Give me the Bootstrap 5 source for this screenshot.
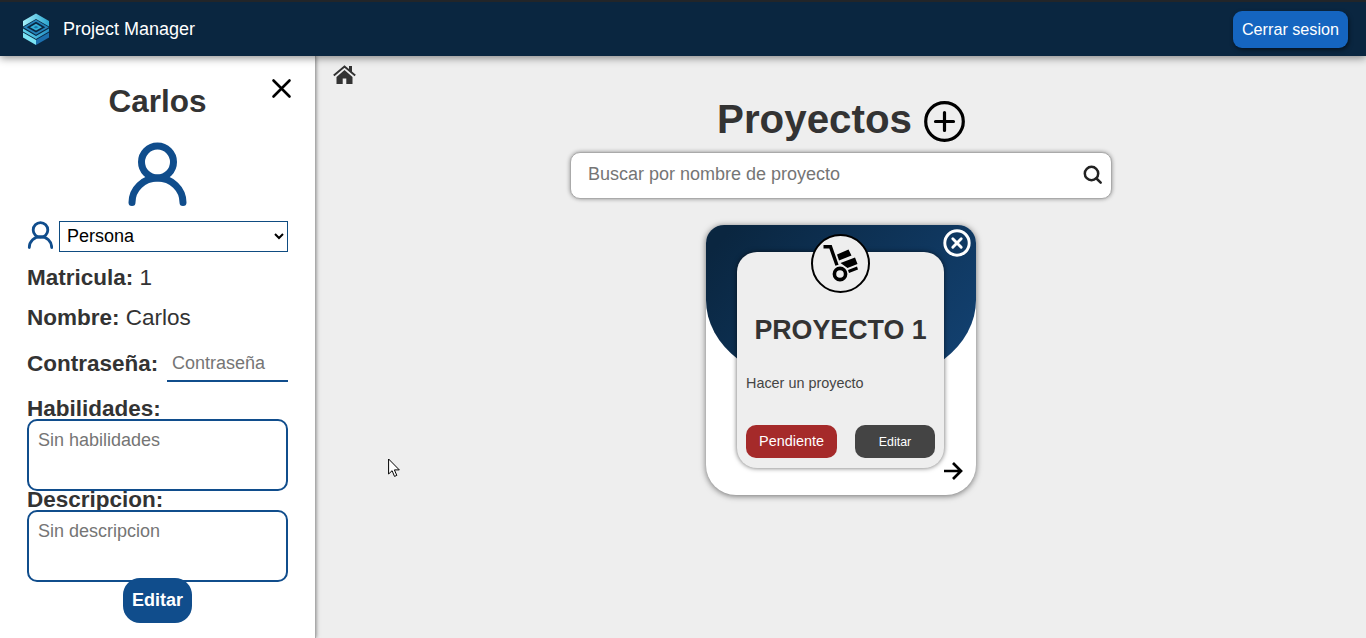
<!DOCTYPE html>
<html lang="es">
<head>
<meta charset="utf-8">
<meta name="viewport" content="width=device-width, initial-scale=1">
<title>Project Manager</title>
<link href="https://cdn.jsdelivr.net/npm/bootstrap@5.3.0/dist/css/bootstrap.min.css" rel="stylesheet">
<style>
  body { font-family: "Liberation Sans", Arial, sans-serif; color: #333; background: #eee; height: 638px; overflow: hidden; line-height: 1.15; }
  svg { display: block; flex: none; }
  .topbar { height: 56px; background: #0a2640; border-top: 2px solid #222529; box-shadow: 0 2px 8px rgba(0,0,0,.45); z-index: 3; padding: 0 18px 0 22px; }
  .brand-name { font-size: 18px; color: #fff; margin-left: 13px; }
  .btn-logout { background: #1565c0; color: #fff; font-size: 16.2px; width: 115px; height: 37px; border-radius: 9px; box-shadow: 1px 2px 4px rgba(0,0,0,.5); padding: 0; margin-top: 1px; }
  .sidebar { width: 316px; background: #fff; border-right: 1px solid #aaa; box-shadow: 0 0 4px rgba(0,0,0,.5); padding: 20px 27px 0; z-index: 2; }
  .user-title { font-size: 31.5px; font-weight: 700; line-height: 37px; margin: 7px 0 0; }
  .user-avatar { margin-top: 21px; }
  .btn-x { right: 22px; top: 21px; }
  .role-row { margin-top: 14px; }
  .role-row svg { margin-top: -3px; }
  .role-select { appearance: auto; border: 1px solid #0f4c81; background: #fff; color: #000; font-size: 18px; width: 229px; height: 31px; padding: 0 3px 1px; border-radius: 0; }
  .field-row { font-size: 22.5px; line-height: 26px; white-space: nowrap; }
  .field-row b, .field-label { font-weight: 700; }
  .field-label { font-size: 22.5px; line-height: 20px; }
  .pass-input { width: 121px; height: 37px; border: 0; border-bottom: 2px solid #104d8c; border-radius: 0; padding: 1px 5px 0; font-size: 18px; background: transparent; }
  .note-area { width: 261px; height: 72px; border: 2px solid #104d8c; border-radius: 10px; resize: none; font-size: 18px; padding: 9px; line-height: 20px; background: #fff; display: block; }
  ::placeholder { color: #757575 !important; opacity: 1; }
  .btn-save { width: 69px; height: 45px; border-radius: 17px; background: #104d8c; color: #fff; font-weight: 700; font-size: 18px; padding: 0; margin-top: -4px; position: relative; }
  .page-title { font-size: 40.3px; font-weight: 700; line-height: 48px; margin: 0; }
  .search-box { width: 542px; height: 47px; background: #fff; border: 1px solid #aaa; border-radius: 10px; box-shadow: 0 0 4px rgba(0,0,0,.4); padding: 0 8px 2px 17px; margin-top: 8px; }
  .search-box input { font-size: 18px; border: 0; padding: 0; background: transparent; }
  .project { width: 270px; height: 270px; background: #fff; border-radius: 18px 18px 30px 30px; box-shadow: 0 1px 6px rgba(0,0,0,.55); margin-top: 26px; padding: 27px 32px 0 31px; isolation: isolate; }
  .project-cap { left: 0; top: 0; width: 270px; height: 160px; z-index: -1; }
  .project-panel { height: 216px; background: #eee; border-radius: 20px; box-shadow: 0 0 5px rgba(0,0,0,.6); padding: 63px 9px 0; }
  .project-name { font-size: 26.8px; font-weight: 700; line-height: 30px; white-space: nowrap; margin: 0; text-align: center; }
  .project-text { font-size: 14.4px; line-height: 17px; margin: 30px 0 0; color: #444; }
  .project-icon { left: 105px; top: 9px; }
  .project-close { right: 5px; top: 4px; }
  .project-go { right: 13px; bottom: 14px; }
  .chip { height: 33px; border-radius: 10px; color: #fff; padding: 1px 0 0; }
  .chip-state { width: 91px; background: #a52a2a; font-size: 14.4px; }
  .chip-edit { width: 80px; background: #444; font-size: 12.4px; }
  .pointer { left: 388px; top: 458px; z-index: 5; }
</style>
</head>
<body class="d-flex flex-column position-relative">
<header class="topbar d-flex align-items-center justify-content-between position-relative">
  <div class="d-flex align-items-center">
    <svg width="28" height="33" viewBox="0 0 28 33">
      <defs><linearGradient id="lg" x1="0" y1="0" x2="1" y2="0"><stop offset="0" stop-color="#a5f0fa"/><stop offset="1" stop-color="#2aa5cf"/></linearGradient>
      <linearGradient id="lg2" x1="0" y1="0" x2="1" y2="0"><stop offset="0" stop-color="#62d4ec"/><stop offset="1" stop-color="#2590c6"/></linearGradient></defs>
      <path d="M14 .5 27 8V13.500L14 6 1 13.500V8z" fill="url(#lg)"/>
      <path d="M14 7.800 25 14.200 14 20.600 3 14.200z" fill="#0a2640" stroke="#2481b8" stroke-width="1.800"/>
      <path d="M14 10.800 20 14.200 14 17.600 8 14.200z" fill="#35b0d8"/>
      <path d="M14 12.800 16.500 14.200 14 15.600 11.500 14.200z" fill="#1b74a8"/>
      <path d="M1 15.500 14 23 27 15.500v3L14 26 1 18.500z" fill="url(#lg2)"/>
      <path d="M1 19.500 14 27V32L1 24.500z" fill="#7ce4f4"/>
      <path d="M27 19.500 14 27V32L27 24.500z" fill="#1c6fae"/>
    </svg>
    <span class="brand-name">Project Manager</span>
  </div>
  <button class="btn btn-logout">Cerrar sesion</button>
</header>
<div class="d-flex flex-grow-1">
  <aside class="sidebar position-relative d-flex flex-column align-items-center flex-shrink-0">
    <svg class="btn-x position-absolute" width="23" height="23" viewBox="0 0 23 23"><path d="M3.500 3.500 19.500 19.500M19.500 3.500 3.500 19.500" stroke="#000" stroke-width="2.600" stroke-linecap="round"/></svg>
    <h1 class="user-title">Carlos</h1>
    <svg class="user-avatar" width="60" height="66" viewBox="0 0 60 66"><g fill="none" stroke="#104d8c" stroke-width="7" stroke-linecap="round"><circle cx="29.500" cy="21" r="16"/><path d="M4 61.500a25.500 24.500 0 0 1 51 0"/></g></svg>
    <div class="role-row d-flex w-100 justify-content-between align-items-center">
      <svg width="26" height="28" viewBox="0 0 26 28"><g fill="none" stroke="#104d8c" stroke-width="2.800" stroke-linecap="round"><circle cx="13.500" cy="9" r="7.300"/><path d="M2.300 26.500a11.200 10.800 0 0 1 22.400 0"/></g></svg>
      <select class="role-select"><option>Persona</option></select>
    </div>
    <div class="field-row w-100" style="margin-top:13px"><b>Matricula:</b> 1</div>
    <div class="field-row w-100" style="margin-top:14px"><b>Nombre:</b> Carlos</div>
    <div class="field-row w-100 d-flex justify-content-between align-items-center" style="margin-top:14px"><b>Contraseña:</b><input class="pass-input" placeholder="Contraseña"></div>
    <div class="field-label w-100" style="margin-top:17px">Habilidades:</div>
    <textarea class="note-area" placeholder="Sin habilidades"></textarea>
    <div class="field-label w-100" style="margin-top:-1px">Descripcion:</div>
    <textarea class="note-area" placeholder="Sin descripcion"></textarea>
    <button class="btn btn-save">Editar</button>
  </aside>
  <main class="flex-grow-1 d-flex flex-column align-items-center">
    <nav class="w-100" style="padding:9px 0 0 17px">
      <svg width="23" height="20" viewBox="0 0 23 20" fill="#333"><path d="M11.500 5 19.500 12V19H13.300V13.500H9.700V19H3.500V12z"/><path d="M.8 10.500 11.500 1.500 22.200 10.500" fill="none" stroke="#333" stroke-width="2"/><path d="M16 1h3v7l-3-2.500z"/></svg>
    </nav>
    <div class="d-flex align-items-center" style="margin-top:11px;gap:12px">
      <h2 class="page-title">Proyectos</h2>
      <svg width="41" height="41" viewBox="0 0 41 41" style="margin-top:3px"><g fill="none" stroke="#000" stroke-width="3.200"><circle cx="20.500" cy="20.500" r="18.800"/><path d="M20.500 11.500v18M11.500 20.500h18" stroke-linecap="round"/></g></svg>
    </div>
    <div class="search-box d-flex align-items-center">
      <input class="flex-grow-1" placeholder="Buscar por nombre de proyecto">
      <svg width="20" height="20" viewBox="0 0 20 20"><g fill="none" stroke="#222" stroke-width="2.500" stroke-linecap="round"><circle cx="8.500" cy="8.500" r="6.700"/><path d="M13.500 13.500 17.700 17.700"/></g></svg>
    </div>
    <article class="project position-relative">
      <svg class="project-cap position-absolute" viewBox="0 0 270 160"><defs><linearGradient id="cap" x1="0" y1=".2" x2="1" y2=".7"><stop offset="0" stop-color="#0a2640"/><stop offset="1" stop-color="#12406f"/></linearGradient></defs><path d="M0 18A18 18 0 0 1 18 0H252A18 18 0 0 1 270 18V75A110 84 0 0 1 160 159H110A110 84 0 0 1 0 75z" fill="url(#cap)"/></svg>
      <div class="project-panel">
        <h3 class="project-name">PROYECTO 1</h3>
        <p class="project-text">Hacer un proyecto</p>
        <div class="d-flex justify-content-between" style="margin-top:33px">
          <button class="btn chip chip-state">Pendiente</button>
          <button class="btn chip chip-edit">Editar</button>
        </div>
      </div>
      <svg class="project-icon position-absolute" width="59" height="59" viewBox="0 0 59 59"><circle cx="29.500" cy="29.500" r="28.500" fill="#eee" stroke="#000" stroke-width="2"/><path d="M12.500 12.800h7l6.500 18.500" fill="none" stroke="#000" stroke-width="3.400"/><circle cx="29" cy="40" r="5.600" fill="none" stroke="#000" stroke-width="3.600"/><path d="M26 20.500 37.500 15.500 40.500 21.500 28 26.500zM29.500 29 44 23.500 46.500 30 36.500 34zM37 36l9-3.500 1 3-9 3.500z"/></svg>
      <svg class="project-close position-absolute" width="28" height="28" viewBox="0 0 28 28"><g fill="none" stroke="#fff" stroke-width="2.900" stroke-linecap="round"><circle cx="14" cy="14" r="12.200"/><path d="M9.800 9.800 18.200 18.200M18.200 9.800 9.800 18.200"/></g></svg>
      <svg class="project-go position-absolute" width="20" height="20" viewBox="0 0 20 20"><path d="M1 10h16M10 2l8 8-8 8" fill="none" stroke="#000" stroke-width="2.700"/></svg>
    </article>
  </main>
</div>
<svg class="pointer position-absolute" width="13" height="20" viewBox="0 0 13 20"><path d="M.6 1v15l3.500-3.300 2.400 5.700 2.300-1-2.400-5.500h4.900z" fill="#fff" stroke="#000" stroke-width="1"/></svg>
<script src="https://cdn.jsdelivr.net/npm/bootstrap@5.3.0/dist/js/bootstrap.bundle.min.js"></script>
</body>
</html>
